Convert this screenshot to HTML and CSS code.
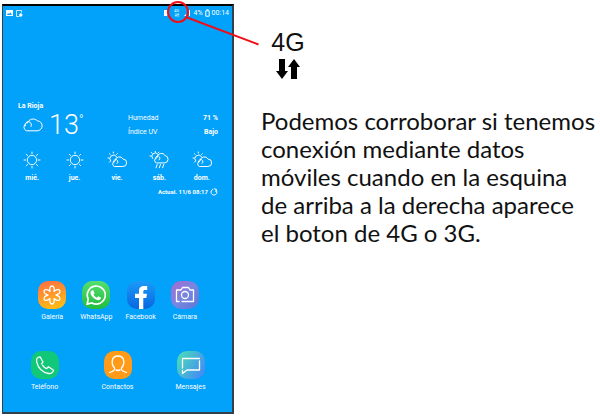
FILE: index.html
```html
<!DOCTYPE html>
<html lang="es">
<head>
<meta charset="utf-8">
<meta name="viewport" content="width=device-width, initial-scale=1">
<title>Conexión mediante datos móviles</title>
<link rel="stylesheet" href="styles.css">
</head>
<body>
<svg class="defs" aria-hidden="true">
  <defs>
    <linearGradient id="gallery-bg" x1="0" y1="0" x2="0.3" y2="1"><stop offset="0" stop-color="#ff6c45"/><stop offset="1" stop-color="#ffb817"/></linearGradient>
    <linearGradient id="whatsapp-bg" x1="0" y1="0" x2="0" y2="1"><stop offset="0" stop-color="#55df70"/><stop offset="1" stop-color="#20bd3c"/></linearGradient>
    <linearGradient id="facebook-bg" x1="0" y1="0" x2="0" y2="1"><stop offset="0" stop-color="#1a9af8"/><stop offset="1" stop-color="#0867e0"/></linearGradient>
    <linearGradient id="camera-bg" x1="0" y1="0" x2="1" y2="1"><stop offset="0" stop-color="#aa69d2"/><stop offset="0.5" stop-color="#7886e0"/><stop offset="1" stop-color="#5a78d8"/></linearGradient>
    <linearGradient id="messages-bg" x1="0" y1="0.2" x2="1" y2="0.8"><stop offset="0" stop-color="#4adbb8"/><stop offset="1" stop-color="#4488f8"/></linearGradient>
    <symbol id="sun" viewBox="0 0 20 18"><circle cx="10" cy="9" r="4.7"/><path d="M10 1v1.6M10 15.4V17M2 9h1.6M16.4 9H18M4.3 3.3l1.2 1.2M14.5 13.5l1.2 1.2M15.7 3.3l-1.2 1.2M5.5 13.5l-1.2 1.2"/></symbol>
    <symbol id="partly" viewBox="0 0 20 18"><path d="M3.6 10A3.6 3.6 0 1 1 9.5 5.5M6.3 1v1M1 7h1M2.4 2.7l.8.8M10.3 2.7l-.8.8M2.4 11.2l.8-.8"/><path d="M10 12.5a2.2 2.2 0 1 0-3.4-1.2M7.5 10.2a2.9 2.9 0 0 0-.2 5.3h8.5a3.7 3.7 0 0 0 .3-7.4 4.4 4.4 0 0 0-8.2 1.8"/></symbol>
    <symbol id="rain" viewBox="0 0 20 18"><path d="M3.6 7.5A3.4 3.4 0 1 1 9 3.2M6.3.2v.8M1 5h1M2.4 1.5l.8.8M10 1.1l-.8.8"/><path d="M10 9a2.2 2.2 0 1 0-3.4-1.2M7.5 6.7a2.8 2.8 0 0 0-.2 5.2h8.5a3.7 3.7 0 0 0 .3-7.3 4.4 4.4 0 0 0-8.2 1.8M8.2 13.5l-1.2 3.3M11.5 13.5l-1.2 3.3M14.8 13.5l-1.2 3.3"/></symbol>
  </defs>
</svg>
<main class="guide">
  <section class="phone" aria-label="Pantalla de inicio">
    <header class="status">
      <svg class="notices" viewBox="0 0 20 9"><path fill="#fff" fill-rule="evenodd" d="M1 1h7v6H1zM2 6h5L5.500 3.500 4 5 3 4z"/><path fill="none" stroke="#fff" stroke-width=".8" d="M14.500 7.500h-3v-6h5v2"/><circle cx="15.800" cy="6" r="1.700" fill="#fff"/></svg>
      <div class="status-right">
        <svg class="alarm" viewBox="0 0 6 8"><path fill="#fff" d="M1 1h3q2 3 0 6H1z"/></svg>
        <span class="network"><span>4G</span><svg viewBox="0 0 6 4"><path d="M2 0v3M1 2l1 1.500L3 2M4.200 4V1M3.200 2l1-1.500 1 1.500" fill="none" stroke="#fff" stroke-width=".6"/></svg></span>
        <svg class="signal" viewBox="0 0 6 8"><path d="M0 7h2V5zM5 1h1v6H5z" fill="#fff"/></svg>
        <span>4%</span>
        <svg class="battery" viewBox="0 0 5 8"><path d="M1.500.8h2M.8 1.800h3.400v5.400H.8z" fill="none" stroke="#fff"/></svg>
        <time>00:14</time>
      </div>
    </header>
    <section class="weather" aria-label="Clima">
      <div class="now">
        <div>
          <h2 class="city">La Rioja</h2>
          <div class="temperature">
            <svg class="cloud line" viewBox="0 0 22 16"><path d="M10 9.500A3.200 3.200 0 1 0 4.200 8.800M5 6.500a4.100 4.100 0 0 0 .4 7.300H16a5 5 0 0 0 .3-10 6 6 0 0 0-10 2.200"/></svg>
            <span class="degrees">13<sup>°</sup></span>
          </div>
        </div>
        <dl class="facts"><div><dt>Humedad</dt><dd>71 %</dd></div><div><dt>Índice UV</dt><dd>Bajo</dd></div></dl>
      </div>
      <ul class="days">
        <li><svg class="line"><use href="#sun"/></svg>mié.</li>
        <li><svg class="line"><use href="#sun"/></svg>jue.</li>
        <li><svg class="line"><use href="#partly"/></svg>vie.</li>
        <li><svg class="line"><use href="#rain"/></svg>sáb.</li>
        <li><svg class="line"><use href="#partly"/></svg>dom.</li>
      </ul>
      <p class="updated">Actual. 11/6 08:17 <svg class="line" viewBox="0 0 8 8"><path d="M3 1.200a3 3 0 1 0 3 .6M4.500.8l2 .7-.8 1.800"/></svg></p>
    </section>
    <nav class="launcher" aria-label="Aplicaciones">
      <div class="apps">
        <a href="#"><svg viewBox="0 0 28 28"><rect width="28" height="28" rx="10" fill="url(#gallery-bg)"/><path class="glyph" d="M12 10.500C11.200 7.800 12.200 5 14 5s2.800 2.800 2 5.500c2-2 4.900-2.600 5.800-1s-1 3.800-3.800 4.500c2.800.7 4.700 2.900 3.800 4.500s-3.800 1-5.800-1c.8 2.700-.2 5.500-2 5.500s-2.800-2.800-2-5.500c-2 2-4.900 2.600-5.800 1s1-3.800 3.800-4.500c-2.800-.7-4.700-2.900-3.800-4.500s3.800-1 5.800 1"/></svg>Galería</a>
        <a href="#"><svg viewBox="0 0 28 28"><rect width="28" height="28" rx="10" fill="url(#whatsapp-bg)"/><path fill="none" stroke="#fff" stroke-width="1.700" d="M6.200 18a9 9 0 1 1 3.700 3.900L5.200 23z"/><path fill="#fff" d="M11.200 9.200l1.400 3-1.100 1.300c.8 1.500 1.800 2.500 3.400 3.200l1.300-1.500 3 1.500c-.3 2-2.200 2.800-4 2.300-3.300-1-5.600-3.300-6.600-6.200-.5-1.700.7-3.800 2.600-3.600z"/></svg>WhatsApp</a>
        <a href="#"><svg viewBox="0 0 28 28"><rect width="28" height="28" rx="10" fill="url(#facebook-bg)"/><path fill="#fff" d="M12 28V17H8v-4.200h4V10c0-3.500 2-5 5-5h3.200v4H18c-1.300 0-1.700.6-1.700 1.700v2.100H20l-.7 4.200h-3v11z"/></svg>Facebook</a>
        <a href="#"><svg viewBox="0 0 28 28"><rect width="28" height="28" rx="10" fill="url(#camera-bg)"/><path class="glyph" d="M8 20.500H5.500V9H10l1.500-2.500h6L19 9h3.500v11.500H11"/><circle class="glyph" cx="14" cy="14" r="3.500"/></svg>Cámara</a>
      </div>
      <div class="apps dock">
        <a href="#"><svg viewBox="0 0 28 28"><rect width="28" height="28" rx="10" fill="#10c878"/><path class="glyph" d="M10.500 12.800L12 11 9 5.800C6.500 5.800 5 8 5.700 10.800c1.300 5.700 5.800 10.400 11.800 11.700 2.500.5 4.800-1.200 5-3.300l-5-3.400-2 1.900c-1.700-.8-3-1.900-4-3.500"/></svg>Teléfono</a>
        <a href="#"><svg viewBox="0 0 28 28"><rect width="28" height="28" rx="10" fill="#ff9b19"/><path class="glyph" d="M14 5c-7 0-7 8-3.500 12 .8 2-1 3-5 4.500M14 5c7 0 7 8 3.500 12-.8 2 1 3 5 4.500M12 19l2 .5 2-.5"/></svg>Contactos</a>
        <a href="#"><svg viewBox="0 0 28 28"><rect width="28" height="28" rx="10" fill="url(#messages-bg)"/><path class="glyph" d="M5.500 17V7.500h17M22.500 10v9H10l-4.500 3.500v-3"/></svg>Mensajes</a>
      </div>
    </nav>
  </section>
  <section class="explanation">
    <div class="badge">
      <h1>4G</h1>
      <svg viewBox="0 0 24 20" aria-label="Subida y bajada de datos"><path d="M3 0h6v12h3L6 20 0 12h3zM15 20V8h-3l6-8 6 8h-3v12z"/></svg>
    </div>
    <p>Podemos corroborar si tenemos<br>conexión mediante datos<br>móviles cuando en la esquina<br>de arriba a la derecha aparece<br>el boton de 4G o 3G.</p>
  </section>
  <svg class="pointer" viewBox="0 0 94 46" aria-hidden="true"><circle cx="12" cy="12" r="10"/><path d="M21 17.500l71.500 27"/></svg>
</main>
</body>
</html>
```
FILE: styles.css
```css
* { box-sizing: border-box; }
body { margin: 0; background: #fff; color: #111; }
.defs { position: absolute; width: 0; height: 0; }
.guide {
  position: relative;
  display: grid;
  grid-template-columns: 232px 1fr;
  column-gap: 27px;
  padding: 4px 0 3px 2px;
}
.phone {
  display: flex;
  flex-direction: column;
  padding-bottom: 20px;
  background: #02a1fa;
  border: 2px solid #33414b;
  border-top-color: #000;
  border-left-width: 1px;
  color: #fff;
  font: 7px/10px Roboto, sans-serif;
}
.status {
  display: flex;
  justify-content: space-between;
  align-items: center;
  height: 14px;
  padding: 0 3px 0 2px;
  font-size: 7px;
}
.notices { width: 20px; height: 9px; }
.status-right { display: flex; align-items: center; gap: 2px; }
.alarm { width: 6px; height: 8px; margin-right: 3px; }
.network { display: grid; justify-items: center; font-size: 4px; line-height: 4px; }
.network svg { width: 6px; height: 4px; }
.signal { width: 6px; height: 8px; margin: 0 2px; }
.battery { width: 5px; height: 8px; }
.line, .glyph { fill: none; stroke: #fff; stroke-linecap: round; stroke-linejoin: round; }
.line { stroke-width: 1; }
.glyph { stroke-width: 1.3; }
.weather { padding: 81px 9px 0 8px; }
.now { display: flex; justify-content: space-between; padding: 0 5px 0 7px; }
.city { margin: 0; font-size: 7px; line-height: 10px; }
.temperature { display: flex; align-items: center; gap: 6px; height: 28px; }
.cloud { width: 22px; height: 16px; margin-left: 3px; }
.degrees { font-size: 27px; font-weight: 300; line-height: 28px; }
.degrees sup { font-size: 12px; line-height: 0; }
.facts { width: 90px; margin: 12px 0 0; }
.facts div { display: flex; justify-content: space-between; margin-bottom: 4px; }
.facts dd { margin: 0; font-weight: 700; }
.days {
  display: grid;
  grid-template-columns: repeat(5, 1fr);
  margin: 10px 0 0;
  padding: 0;
  list-style: none;
  text-align: center;
  font-weight: 700;
}
.days svg { display: block; width: 20px; height: 18px; margin: 0 auto 4px; }
.updated {
  display: flex;
  justify-content: flex-end;
  align-items: center;
  gap: 2px;
  margin: 4px 5px 0;
  font-size: 6px;
  font-weight: 700;
}
.updated svg { width: 8px; height: 8px; }
.launcher { display: grid; gap: 29px; padding-top: 84px; }
.apps {
  display: grid;
  grid-template-columns: repeat(4, 1fr);
  padding: 0 25px 0 27px;
}
.dock { grid-template-columns: repeat(3, 1fr); padding: 0 5px; }
.apps a {
  display: grid;
  justify-items: center;
  gap: 3px;
  color: inherit;
  text-decoration: none;
}
.apps svg { width: 28px; height: 28px; }
.explanation { padding-top: 24px; }
.badge { display: grid; justify-items: center; width: 54px; }
.badge h1 { margin: 0; font: 25px/28px "Liberation Sans", sans-serif; }
.badge svg { width: 24px; height: 20px; margin-top: 3px; }
.explanation p { margin: 28px 0 0; font: 24px/28px Lato, "Noto Sans", sans-serif; }
.pointer {
  position: absolute;
  top: 0;
  left: 166px;
  width: 94px;
  height: 46px;
  fill: none;
  stroke: #f20d17;
  stroke-width: 2;
}
```
